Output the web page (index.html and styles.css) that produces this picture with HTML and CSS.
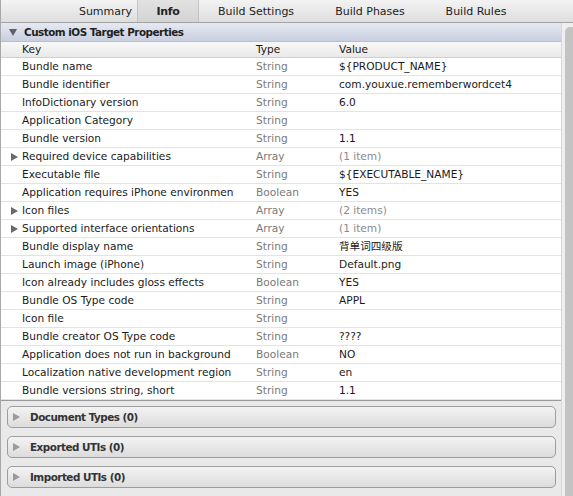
FILE: index.html
```html
<!DOCTYPE html>
<html>

<head>
    <meta charset="UTF-8">
    <title>Info</title>
    <link rel="stylesheet" href="styles.css">
</head>

<body>
    <div class="window">
        <ul class="tabs">
            <li class="tab t-summary">Summary</li>
            <li class="tab t-info selected">Info</li>
            <li class="tab t-settings">Build Settings</li>
            <li class="tab t-phases">Build Phases</li>
            <li class="tab t-rules">Build Rules</li>
        </ul>

        <div class="main">
            <div class="content">
                <div class="section-head">
                    <span class="tri-down"></span>
                    Custom iOS Target Properties
                </div>
                <div class="row colhead">
                    <span></span><span class="key">Key</span><span class="type">Type</span><span class="value">Value</span>
                </div>
                <div id="rows"></div>

                <div class="panels">
                    <div class="panel"><span class="tri-right gray"></span>Document Types (0)</div>
                    <div class="panel"><span class="tri-right gray"></span>Exported UTIs (0)</div>
                    <div class="panel"><span class="tri-right gray"></span>Imported UTIs (0)</div>
                </div>
            </div>
            <div class="scrollbar">
                <div class="thumb"></div>
            </div>
        </div>
    </div>

    <script>
        var props = [
            ["Bundle name", "String", "${PRODUCT_NAME}"],
            ["Bundle identifier", "String", "com.youxue.rememberwordcet4"],
            ["InfoDictionary version", "String", "6.0"],
            ["Application Category", "String", ""],
            ["Bundle version", "String", "1.1"],
            ["Required device capabilities", "Array", "(1 item)", true],
            ["Executable file", "String", "${EXECUTABLE_NAME}"],
            ["Application requires iPhone environment", "Boolean", "YES"],
            ["Icon files", "Array", "(2 items)", true],
            ["Supported interface orientations", "Array", "(1 item)", true],
            ["Bundle display name", "String", "背单词四级版"],
            ["Launch image (iPhone)", "String", "Default.png"],
            ["Icon already includes gloss effects", "Boolean", "YES"],
            ["Bundle OS Type code", "String", "APPL"],
            ["Icon file", "String", ""],
            ["Bundle creator OS Type code", "String", "????"],
            ["Application does not run in background", "Boolean", "NO"],
            ["Localization native development region", "String", "en"],
            ["Bundle versions string, short", "String", "1.1"]
        ];

        var rows = document.getElementById("rows");
        props.forEach(function (p) {
            var row = document.createElement("div");
            row.className = "row";
            row.innerHTML =
                '<span>' + (p[3] ? '<span class="tri-right"></span>' : '') + '</span>' +
                '<span class="key">' + p[0] + '</span>' +
                '<span class="type">' + p[1] + '</span>' +
                '<span class="value' + (p[3] ? ' count' : '') + '">' + p[2] + '</span>';
            rows.appendChild(row);
        });
    </script>
</body>

</html>
```

FILE: styles.css
```css
html,
body {
    margin: 0;
    padding: 0;
    height: 100%;
}

body {
    font-family: "DejaVu Sans", "Noto Sans CJK SC", sans-serif;
    font-size: 10.6px;
    color: #1a1a1a;
    background-color: #e9e9e9;
    overflow: hidden;
}

.window {
    height: 496px;
    border-left: 1px solid #a8a8a8;
    display: flex;
    flex-direction: column;
}

.tabs {
    list-style-type: none;
    margin: 0;
    padding: 0 0 0 73px;
    height: 22px;
    display: flex;
    background: linear-gradient(#f3f3f3, #dedede);
    border-bottom: 1px solid #a3a3a3;
}

.tab {
    line-height: 23px;
    text-align: center;
    font-size: 11px;
    color: #222;
}

.t-summary { width: 63px; }
.t-info { width: 60px; }
.t-settings { width: 114px; }
.t-phases { width: 114px; }
.t-rules { width: 98px; }

.tab.selected {
    font-weight: bold;
    letter-spacing: -0.3px;
    background: linear-gradient(#e2e2e2, #d3d3d3);
    border-left: 1px solid #c4c4c4;
    border-right: 1px solid #c4c4c4;
}

.main {
    flex: 1;
    display: flex;
    overflow: hidden;
}

.content {
    width: 560px;
    display: flex;
    flex-direction: column;
}

.section-head {
    height: 18px;
    line-height: 18px;
    font-weight: bold;
    font-size: 10.4px;
    letter-spacing: -0.5px;
    color: #222;
    background: linear-gradient(#e6e9f2, #c9cfe0);
    border-bottom: 1px solid #b9bfcc;
    padding-left: 8px;
    display: flex;
    align-items: center;
    gap: 7px;
}

.tri-down {
    width: 0;
    height: 0;
    border-left: 4px solid transparent;
    border-right: 4px solid transparent;
    border-top: 7px solid #5f6166;
}

.tri-right {
    display: inline-block;
    width: 0;
    height: 0;
    border-top: 4px solid transparent;
    border-bottom: 4px solid transparent;
    border-left: 7px solid #6a6a6a;
}

.tri-right.gray {
    border-left-color: #9a9a9a;
    margin-right: 10px;
}

.row {
    display: grid;
    grid-template-columns: 21px 234px 83px 1fr;
    height: 17px;
    line-height: 17px;
    background-color: #fff;
    border-bottom: 1px solid #e3e3e3;
    white-space: nowrap;
}

.row > span:first-child {
    display: flex;
    align-items: center;
    padding-left: 10px;
}

.row .key {
    overflow: hidden;
    margin-right: 22px;
}

.row .type {
    color: #7a7a7a;
}

.row .value.count {
    color: #8a8a8a;
}

.row.colhead {
    height: 15px;
    line-height: 15px;
    background: linear-gradient(#f8f8f8, #e9e9e9);
    border-bottom: 1px solid #cfcfcf;
}

.row.colhead .type {
    color: #1a1a1a;
}

.panels {
    flex: 1;
    border-top: 1px solid #9a9a9a;
    padding: 5px 5px 0 6px;
    display: flex;
    flex-direction: column;
    gap: 8px;
}

.panel {
    box-sizing: border-box;
    height: 22px;
    border: 1px solid #9d9d9d;
    border-radius: 5px;
    background: linear-gradient(#f3f3f3, #dcdcdc);
    display: flex;
    align-items: center;
    padding-left: 5px;
    font-weight: bold;
    font-size: 10.4px;
    letter-spacing: -0.5px;
    color: #333;
}

.scrollbar {
    flex: 1;
    background-color: #efefef;
    border-left: 1px solid #d8d8d8;
    padding: 4px 0 0 3px;
}

.thumb {
    height: 100%;
    background-color: #c3c3c3;
    border-radius: 5px 0 0 0;
}
```
